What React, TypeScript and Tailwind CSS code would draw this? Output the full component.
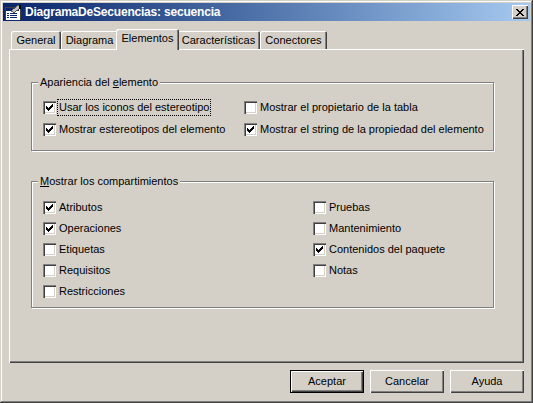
import React from 'react';

const face = 'bg-[#d4d0c8]';

const CheckBox: React.FC<{ checked?: boolean }> = ({ checked }) => (
    <span className="w-[13px] h-[13px] shrink-0 bg-white flex items-center justify-center shadow-[inset_1px_1px_#808080,inset_2px_2px_#404040,inset_-1px_-1px_#ffffff,inset_-2px_-2px_#d4d0c8]">
        {checked && (
            <svg width="7" height="7" viewBox="0 0 7 7" shapeRendering="crispEdges">
                <path d="M6 0h1v1h-1z M5 1h2v1h-2z M0 2h1v1h-1z M4 2h3v1h-3z M0 3h2v1h-2z M3 3h3v1h-3z M0 4h5v1h-5z M1 5h3v1h-3z M2 6h1v1h-1z" fill="#000" />
            </svg>
        )}
    </span>
);

interface OptionProps {
    label: string;
    checked?: boolean;
    focused?: boolean;
}

const Option: React.FC<OptionProps> = ({ label, checked, focused }) => (
    <div className="flex items-center gap-[3px] h-[13px]">
        <CheckBox checked={checked} />
        <span
            className={
                'leading-[13px] whitespace-nowrap ' +
                (focused ? 'outline outline-1 outline-dotted outline-black outline-offset-1' : '')
            }
        >
            {label}
        </span>
    </div>
);

const GroupBox: React.FC<{ title: React.ReactNode; className?: string; children: React.ReactNode }> = ({ title, className, children }) => (
    <div className={'relative w-[463px] border border-[#808080] shadow-[1px_1px_0_#ffffff,inset_1px_1px_0_#ffffff] ' + (className ?? '')}>
        <span className={'absolute -top-[7px] left-[6px] px-[2px] leading-[13px] ' + face}>{title}</span>
        {children}
    </div>
);

const Tab: React.FC<{ label: string; width: string; selected?: boolean }> = ({ label, width, selected }) => (
    <div
        className={
            'flex items-center justify-center shadow-[inset_1px_1px_#ffffff,inset_-1px_0_#404040,inset_-2px_0_#808080] rounded-t-[2px] ' +
            face +
            ' ' +
            width +
            (selected ? ' h-[21px] -mx-[2px] -mb-px relative z-10 pb-[3px]' : ' h-[18px] pt-px')
        }
    >
        {label}
    </div>
);

const Button: React.FC<{ label: string; isDefault?: boolean }> = ({ label, isDefault }) => (
    <div
        className={
            'w-[74px] h-[23px] flex items-center justify-center ' +
            face +
            (isDefault
                ? ' border border-black shadow-[inset_1px_1px_#ffffff,inset_-1px_-1px_#404040,inset_-2px_-2px_#808080]'
                : ' shadow-[inset_1px_1px_#ffffff,inset_-1px_-1px_#404040,inset_-2px_-2px_#808080]')
        }
    >
        {label}
    </div>
);

const TitleIcon = () => (
    <svg width="17" height="15" viewBox="0 0 17 15" shapeRendering="crispEdges">
        <rect x="0" y="2" width="15" height="13" fill="#ffffff" />
        <rect x="0" y="2" width="15" height="13" fill="none" stroke="#404040" strokeWidth="1" />
        <rect x="1" y="3" width="13" height="3" fill="#0a246a" />
        <rect x="2" y="8" width="2" height="1" fill="#0a246a" />
        <rect x="5" y="8" width="7" height="1" fill="#0a246a" />
        <rect x="2" y="10" width="2" height="1" fill="#0a246a" />
        <rect x="5" y="10" width="7" height="1" fill="#0a246a" />
        <rect x="2" y="12" width="2" height="1" fill="#0a246a" />
        <rect x="5" y="12" width="7" height="1" fill="#0a246a" />
        <path d="M6 6 L13 0 L16 2 L9 8 Z" fill="#c0c0c0" stroke="#404040" strokeWidth="0.8" />
        <rect x="14" y="0" width="2" height="4" fill="#000" />
    </svg>
);

export default function App() {
    return (
        <div
            className={
                'w-[533px] h-[403px] p-[3px] flex flex-col text-[11px] text-black shadow-[inset_-1px_-1px_#404040,inset_1px_1px_#d4d0c8,inset_-2px_-2px_#808080,inset_2px_2px_#ffffff] ' +
                face
            }
            style={{ fontFamily: '"Liberation Sans", Arial, sans-serif' }}
        >
            {/* title bar */}
            <div className="h-[18px] flex items-center bg-gradient-to-r from-[#0a246a] to-[#a6caf0] pl-[2px] pr-[2px]">
                <TitleIcon />
                <span className="ml-[3px] text-white font-bold text-[12px] tracking-[-0.2px] leading-[14px]">DiagramaDeSecuencias: secuencia</span>
                <div className="ml-auto w-[16px] h-[14px] flex items-center justify-center bg-[#d4d0c8] shadow-[inset_1px_1px_#ffffff,inset_-1px_-1px_#404040,inset_-2px_-2px_#808080]">
                    <svg width="8" height="7" viewBox="0 0 8 7" shapeRendering="crispEdges">
                        <path d="M0 0h2v1h-2z M6 0h2v1h-2z M1 1h2v1h-2z M5 1h2v1h-2z M2 2h4v1h-4z M3 3h2v1h-2z M2 4h4v1h-4z M1 5h2v1h-2z M5 5h2v1h-2z M0 6h2v1h-2z M6 6h2v1h-2z" fill="#000" />
                    </svg>
                </div>
            </div>

            <div className="px-[6px] flex flex-col">
                {/* tabs */}
                <div className="mt-[8px] h-[20px] flex items-end pl-[2px]">
                    <Tab label="General" width="w-[50px]" />
                    <Tab label="Diagrama" width="w-[57px]" />
                    <Tab label="Elementos" width="w-[63px]" selected />
                    <Tab label="Características" width="w-[83px]" />
                    <Tab label="Conectores" width="w-[67px]" />
                </div>

                {/* tab panel */}
                <div className="h-[314px] pl-[22px] pt-[33px] shadow-[inset_1px_1px_#ffffff,inset_-1px_-1px_#404040,inset_-2px_-2px_#808080]">
                    <GroupBox
                        title={
                            <>
                                Apariencia del <span className="underline">e</span>lemento
                            </>
                        }
                    >
                        <div className="pl-[11px] pt-[18px] pb-[14px] flex">
                            <div className="w-[201px] flex flex-col gap-[9px]">
                                <Option label="Usar los iconos del estereotipo" checked focused />
                                <Option label="Mostrar estereotipos del elemento" checked />
                            </div>
                            <div className="flex flex-col gap-[9px]">
                                <Option label="Mostrar el propietario de la tabla" />
                                <Option label="Mostrar el string de la propiedad del elemento" checked />
                            </div>
                        </div>
                    </GroupBox>

                    <GroupBox
                        className="mt-[30px]"
                        title={
                            <>
                                <span className="underline">M</span>ostrar los compartimientos
                            </>
                        }
                    >
                        <div className="pl-[11px] pt-[19px] pb-[9px] flex">
                            <div className="w-[270px] flex flex-col gap-[8px]">
                                <Option label="Atributos" checked />
                                <Option label="Operaciones" checked />
                                <Option label="Etiquetas" />
                                <Option label="Requisitos" />
                                <Option label="Restricciones" />
                            </div>
                            <div className="flex flex-col gap-[8px]">
                                <Option label="Pruebas" />
                                <Option label="Mantenimiento" />
                                <Option label="Contenidos del paquete" checked />
                                <Option label="Notas" />
                            </div>
                        </div>
                    </GroupBox>
                </div>

                {/* buttons */}
                <div className="mt-[7px] flex justify-end gap-[6px]">
                    <Button label="Aceptar" isDefault />
                    <Button label="Cancelar" />
                    <Button label="Ayuda" />
                </div>
            </div>
        </div>
    );
}
